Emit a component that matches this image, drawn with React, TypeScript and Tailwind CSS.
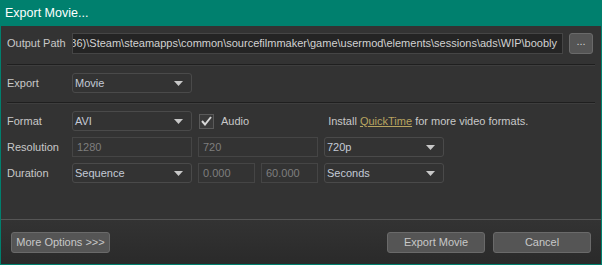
import React from 'react';

const font = { fontFamily: '"Liberation Sans", Arial, sans-serif' };

function Arrow() {
    return (
        <svg width="9" height="5" viewBox="0 0 9 5" className="shrink-0">
            <path d="M0 0h9L4.5 5z" fill="#c8c8c8" />
        </svg>
    );
}

function Combo({ value, className }: { value: string; className: string }) {
    return (
        <div className={`h-[20px] flex items-center justify-between pl-[2px] pr-[8px] rounded-[3px] border border-[#4a4a4a] bg-[#333333] text-[#c3cad6] whitespace-nowrap ${className}`}>
            <span>{value}</span>
            <Arrow />
        </div>
    );
}

function Field({ value, className }: { value: string; className: string }) {
    return (
        <div className={`h-[20px] flex items-center px-[4px] border border-[#454545] bg-[#333333] text-[#7e7e7e] whitespace-nowrap ${className}`}>
            {value}
        </div>
    );
}

function Button({ label, className }: { label: string; className: string }) {
    return (
        <div className={`h-[21px] flex items-center justify-center rounded-[3px] border border-[#6a6a6a] bg-[#555555] text-[#c8c8c8] whitespace-nowrap ${className}`}>
            {label}
        </div>
    );
}

export default function App() {
    return (
        <div className="w-[602px] h-[265px] flex flex-col bg-[#00806e] text-[11px] overflow-hidden" style={font}>
            {/* Title bar */}
            <div className="h-[26px] shrink-0 flex items-center pl-[5px] text-white text-[12.5px]">Export Movie...</div>

            <div className="flex-1 mx-[1px] mb-[1px] flex flex-col bg-[#333333] text-[#c8c8c8]">
                {/* Output path */}
                <div className="flex items-center h-[21px] mt-[7px] pl-[6px]">
                    <span className="w-[65px] shrink-0 whitespace-nowrap">Output Path</span>
                    <div className="w-[491px] h-[21px] flex items-center justify-end pr-[5px] border border-[#454545] bg-[#242424] text-[#d2d2d2] overflow-hidden whitespace-nowrap">
                        <span className="shrink-0">(x86)\Steam\steamapps\common\sourcefilmmaker\game\usermod\elements\sessions\ads\WIP\boobly</span>
                    </div>
                    <div className="ml-[6px] w-[24px] h-[21px] flex items-center justify-center rounded-[3px] border border-[#6a6a6a] bg-[#555555] text-[#d0d0d0] pb-[4px]">...</div>
                </div>

                <div className="mt-[10px] mx-[6px] h-[2px] border-t border-[#1f1f1f] border-b border-b-[#3e3e3e]" />

                {/* Export */}
                <div className="flex items-center mt-[7px] pl-[6px]">
                    <span className="w-[65px]">Export</span>
                    <Combo value="Movie" className="w-[120px]" />
                </div>

                <div className="mt-[9px] mx-[6px] h-[2px] border-t border-[#1f1f1f] border-b border-b-[#3e3e3e]" />

                {/* Format */}
                <div className="flex items-center mt-[7px] pl-[6px]">
                    <span className="w-[65px]">Format</span>
                    <Combo value="AVI" className="w-[120px]" />
                    <div className="ml-[7px] w-[15px] h-[15px] flex items-center justify-center border border-[#5a5a5a] bg-[#3a3a3a]">
                        <svg width="11" height="10" viewBox="0 0 11 10">
                            <path d="M1 5l3 3.5L10 1" stroke="#d8d8d8" strokeWidth="2" fill="none" />
                        </svg>
                    </div>
                    <span className="ml-[7px]">Audio</span>
                    <span className="ml-[79px] whitespace-nowrap">
                        Install <span className="text-[#b8a460] underline">QuickTime</span> for more video formats.
                    </span>
                </div>

                {/* Resolution */}
                <div className="flex items-center mt-[6px] pl-[6px]">
                    <span className="w-[65px]">Resolution</span>
                    <Field value="1280" className="w-[120px]" />
                    <Field value="720" className="ml-[6px] w-[120px]" />
                    <Combo value="720p" className="ml-[6px] w-[120px]" />
                </div>

                {/* Duration */}
                <div className="flex items-center mt-[6px] pl-[6px]">
                    <span className="w-[65px]">Duration</span>
                    <Combo value="Sequence" className="w-[120px]" />
                    <Field value="0.000" className="ml-[6px] w-[57px]" />
                    <Field value="60.000" className="ml-[6px] w-[57px]" />
                    <Combo value="Seconds" className="ml-[6px] w-[120px]" />
                </div>

                {/* Footer */}
                <div className="mt-auto h-[45px] flex items-center border-t border-[#555555] bg-gradient-to-b from-[#333333] to-[#2a2a2a] px-[10px]">
                    <Button label="More Options >>>" className="w-[99px]" />
                    <Button label="Export Movie" className="ml-auto w-[98px]" />
                    <Button label="Cancel" className="ml-[8px] w-[98px]" />
                </div>
            </div>
        </div>
    );
}
